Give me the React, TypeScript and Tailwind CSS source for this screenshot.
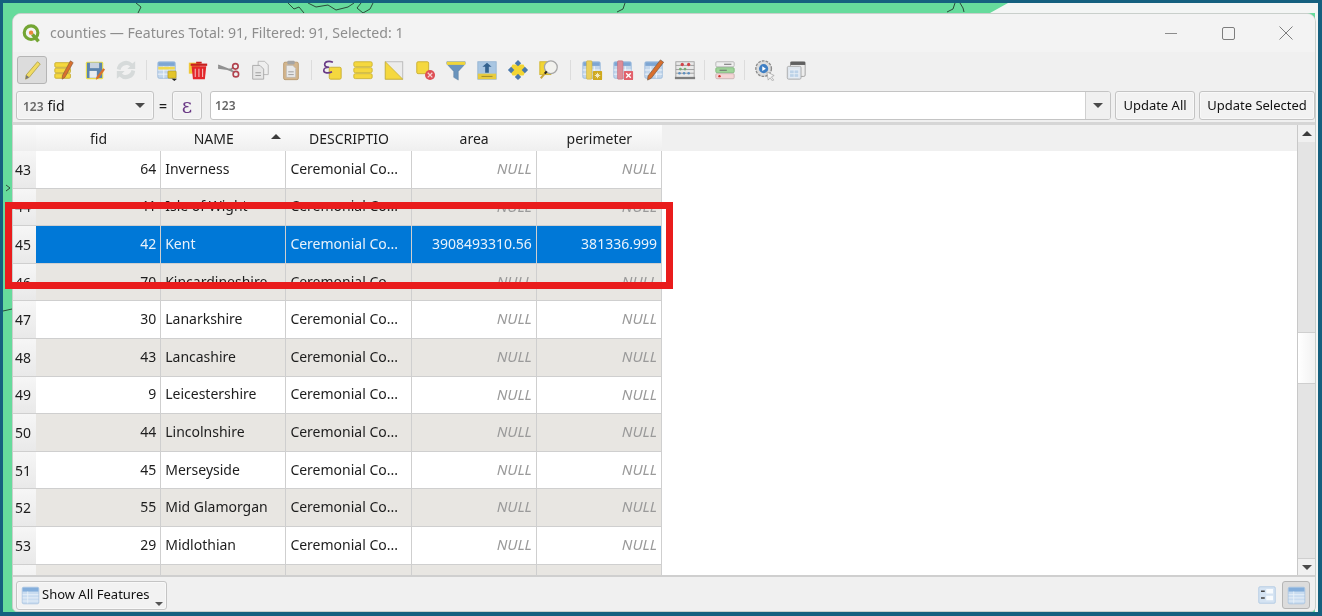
import type { ReactNode } from "react";

const rows = [
  { n: 43, fid: 64, name: "Inverness" },
  { n: 44, fid: 41, name: "Isle of Wight" },
  { n: 45, fid: 42, name: "Kent", area: "3908493310.56", perimeter: "381336.999", selected: true },
  { n: 46, fid: 70, name: "Kincardineshire" },
  { n: 47, fid: 30, name: "Lanarkshire" },
  { n: 48, fid: 43, name: "Lancashire" },
  { n: 49, fid: 9, name: "Leicestershire" },
  { n: 50, fid: 44, name: "Lincolnshire" },
  { n: 51, fid: 45, name: "Merseyside" },
  { n: 52, fid: 55, name: "Mid Glamorgan" },
  { n: 53, fid: 29, name: "Midlothian" },
];

function Ico({ children }: { children: ReactNode }) {
  return (
    <svg viewBox="0 0 24 24" className="h-[22px] w-[22px]">
      {children}
    </svg>
  );
}

// table glyph used by several of the toolbar icons
const TableBase = () => (
  <>
    <rect x="2" y="3" width="19" height="18" rx="1.5" fill="#c4d7ec" stroke="#9dbbdc" />
    <rect x="2.5" y="3.5" width="18" height="4" fill="#7ea6d3" />
    <path d="M2 12h19M2 16.5h19M8.5 8v13M14.5 8v13" stroke="#f3f7fb" strokeWidth="1" />
  </>
);

const icons: ReactNode[] = [
  <Ico key="edit">
    <path d="M18 3l3 2.5L9 20l-4 2 .6-4.5z" fill="#f1dc63" stroke="#a89a3e" strokeWidth=".8" />
    <path d="M5.6 17.5L9 20l-4 2z" fill="#777" />
  </Ico>,
  <Ico key="multi">
    <rect x="2" y="4" width="17" height="5" rx="1" fill="#f5d83e" stroke="#c8ae32" />
    <rect x="2" y="10" width="17" height="5" rx="1" fill="#f5d83e" stroke="#c8ae32" />
    <rect x="2" y="16" width="17" height="5" rx="1" fill="#f5d83e" stroke="#c8ae32" />
    <path d="M19 2l3 2-9 16-3 2 .3-4z" fill="#d9702e" stroke="#8a5a3a" strokeWidth=".7" />
  </Ico>,
  <Ico key="save">
    <rect x="2" y="3" width="19" height="19" rx="1.5" fill="#f0e34a" />
    <rect x="3.2" y="4" width="16.6" height="16.8" fill="#5c84ad" />
    <rect x="6.5" y="4" width="10" height="6" fill="#c8d3df" />
    <rect x="6" y="13" width="8" height="7.5" fill="#e9edf1" />
    <path d="M21 10l2 1.5-7 9.5-3 1.5.5-3z" fill="#d9702e" />
  </Ico>,
  <Ico key="reload">
    <path d="M2 11A10 10 0 0 1 19 5l3-2.500V11h-8.500l3-3A6.500 6.500 0 0 0 6 12z" fill="#d6dada" />
    <path d="M22 13A10 10 0 0 1 5 19l-3 2.500V13h8.500l-3 3A6.500 6.500 0 0 0 18 12z" fill="#d6dada" />
  </Ico>,
  "sep",
  <Ico key="newrow">
    <TableBase />
    <rect x="2.5" y="8.5" width="18" height="3" fill="#f2d94d" />
    <rect x="13" y="13" width="9" height="8" rx="1" fill="#e3c42b" stroke="#a08a20" strokeWidth=".6" />
    <path d="M17 21.5h6l-3 2.5z" fill="#222" />
  </Ico>,
  <Ico key="trash">
    <rect x="2" y="4" width="12" height="12" fill="#f0c93a" />
    <path d="M5 8h16l-1.5 14h-13z" fill="#e3262a" />
    <rect x="4" y="5" width="18" height="2.5" fill="#c9201f" />
    <rect x="10" y="3" width="6" height="2" fill="#c9201f" />
    <path d="M9 10.5v9M13 10.5v9M17 10.5v9" stroke="#f5b9b9" strokeWidth="1.2" />
  </Ico>,
  <Ico key="cut">
    <path d="M0 7l14 5.500 4 2M0 9.500l14 2 3-2.500" stroke="#919191" strokeWidth="2" fill="none" />
    <circle cx="19" cy="8" r="3" fill="none" stroke="#b2434e" strokeWidth="1.800" />
    <circle cx="19.500" cy="16.500" r="3" fill="none" stroke="#b2434e" strokeWidth="1.800" />
  </Ico>,
  <Ico key="copy">
    <path d="M10 2.5h7l4 4V17H10z" fill="#efefef" stroke="#b5b5b5" />
    <path d="M4 7h8l4 4v11H4z" fill="#e6e6e6" stroke="#a9a9a9" />
    <path d="M7 15h6M7 18h6" stroke="#9a9a9a" />
  </Ico>,
  <Ico key="paste">
    <rect x="4" y="3.5" width="16" height="19" rx="1.5" fill="#d4b68d" stroke="#b99a70" />
    <rect x="8" y="2" width="8" height="4" rx="1" fill="#a5a5a5" />
    <path d="M7 7h7l3 3v10H7z" fill="#e8e8e8" stroke="#b3b3b3" strokeWidth=".6" />
    <path d="M9 14h6M9 17h6" stroke="#9a9a9a" />
  </Ico>,
  "sep",
  <Ico key="selexp">
    <rect x="9" y="9" width="13" height="13" rx="1.5" fill="#f5d83e" stroke="#c8ae32" />
    <path d="M13 3.5C8 1.5 4 3 4 6c0 2 2 3 5 3-4 0-6 1.5-6 3.5 0 3 5 3.5 9 1.5" fill="none" stroke="#6a3c86" strokeWidth="1.8" />
  </Ico>,
  <Ico key="selall">
    <rect x="2" y="3" width="20" height="5.4" rx="1.6" fill="#f5d83e" stroke="#cdb537" />
    <rect x="2" y="9.5" width="20" height="5.4" rx="1.6" fill="#f5d83e" stroke="#cdb537" />
    <rect x="2" y="16" width="20" height="5.4" rx="1.6" fill="#f5d83e" stroke="#cdb537" />
  </Ico>,
  <Ico key="invert">
    <rect x="2.5" y="3" width="19" height="19" fill="#ececec" stroke="#b8b8b8" />
    <path d="M2.5 3v19h19z" fill="#f5d83e" stroke="#cdb537" />
  </Ico>,
  <Ico key="desel">
    <rect x="3" y="3" width="13" height="13" rx="1.5" fill="#f5d83e" stroke="#c8ae32" />
    <circle cx="17.5" cy="17.5" r="5.5" fill="#de5057" />
    <path d="M15 15l5 5M20 15l-5 5" stroke="#f7d3d3" strokeWidth="1.4" />
  </Ico>,
  <Ico key="filter">
    <path d="M2 3h20v2.5l-7.5 8V23l-5-3v-6.5L2 5.500z" fill="#6a94bd" stroke="#55799c" strokeWidth=".5" />
    <rect x="2" y="3" width="20" height="3.400" fill="#f0d63a" />
  </Ico>,
  <Ico key="top">
    <rect x="2" y="3" width="20" height="19" fill="#a9c6e2" stroke="#95b5d4" />
    <path d="M12 4l5 4.500h-3V15h-4V8.500H7z" fill="#33628f" />
    <rect x="2" y="16" width="20" height="6" fill="#e7cb3e" />
    <path d="M6 19h12" stroke="#99882a" />
  </Ico>,
  <Ico key="pan">
    <path d="M6 6h12l3 6-3 6H6l-3-6z" fill="#f2d534" />
    <path d="M12 1l3.500 3.500L12 8 8.500 4.500zM12 16l3.500 3.500L12 23l-3.500-3.500zM4.500 8.500L8 12l-3.500 3.500L1 12zM19.500 8.500L23 12l-3.500 3.500L16 12z" fill="#4a79ad" />
  </Ico>,
  <Ico key="zoom">
    <rect x="2" y="3" width="12" height="14" fill="#f2d534" stroke="#cfb52f" />
    <circle cx="14" cy="9" r="7" fill="#f2f2ee" stroke="#a7a7a7" strokeWidth="1.400" />
    <path d="M9 14l-6 7" stroke="#c7a63a" strokeWidth="2.200" />
    <path d="M9.500 13.500L7.500 16" stroke="#222" strokeWidth="2.200" />
  </Ico>,
  "sep12",
  <Ico key="newfield">
    <TableBase />
    <rect x="6" y="2" width="6" height="20" rx="1" fill="#eacf5c" stroke="#c9ae3c" strokeWidth=".6" />
    <rect x="13" y="13" width="10" height="10" rx="1" fill="#cfa91d" />
    <path d="M18 15v6M15 18h6M16 16l4 4M20 16l-4 4" stroke="#f4edc9" strokeWidth="1" />
  </Ico>,
  <Ico key="delfield">
    <TableBase />
    <rect x="6" y="2" width="6" height="20" rx="1" fill="#dd8c97" stroke="#c46a76" strokeWidth=".6" />
    <rect x="13" y="13" width="10" height="10" rx="1" fill="#e2606b" />
    <path d="M15.500 15.500l5 5M20.500 15.500l-5 5" stroke="#fff" strokeWidth="1.500" />
  </Ico>,
  <Ico key="editfield">
    <TableBase />
    <path d="M19 1l3.500 2.500L9 21l-4 2 .5-4.500z" fill="#d9702e" stroke="#7b5a44" strokeWidth=".8" />
  </Ico>,
  <Ico key="abacus">
    <rect x="2" y="3" width="20" height="18" fill="#e9e9e9" stroke="#a2a2a2" />
    <rect x="1" y="19.500" width="22" height="2.500" fill="#7d7d7d" />
    <path d="M2 7h20M2 11.500h20M2 15.500h20" stroke="#9a9a9a" />
    <circle cx="9" cy="6" r="1.800" fill="#d2444a" />
    <circle cx="16" cy="6" r="1.800" fill="#d2444a" />
    <circle cx="7" cy="11" r="1.500" fill="#76ad76" />
    <circle cx="12" cy="11" r="1.500" fill="#76ad76" />
    <circle cx="6" cy="15.500" r="1.400" fill="#5d8fbf" />
    <circle cx="11" cy="15.500" r="1.400" fill="#5d8fbf" />
    <circle cx="16" cy="15.500" r="1.400" fill="#5d8fbf" />
  </Ico>,
  "sep9",
  <Ico key="cond">
    <rect x="2" y="3" width="20" height="5.500" rx="1.200" fill="#efefef" stroke="#b5b5b5" />
    <rect x="2" y="9.500" width="20" height="5.500" rx="1.200" fill="#9fd59a" stroke="#84b87f" />
    <rect x="2" y="16" width="20" height="5.500" rx="1.200" fill="#f5d5d5" stroke="#c8b4b4" />
    <path d="M11 5.700h8M6 12.200h8" stroke="#6e6e6e" strokeWidth="1.200" />
    <circle cx="6" cy="18.700" r="1.300" fill="#d0322f" />
  </Ico>,
  "sep9",
  <Ico key="actions">
    <circle cx="10.500" cy="10.500" r="8.500" fill="#dcdcdc" stroke="#8d8d8d" strokeWidth="1.500" strokeDasharray="3 1.200" />
    <circle cx="10.500" cy="10.500" r="5" fill="#3f7fc4" />
    <path d="M9 8l4 2.500L9 13z" fill="#fff" />
    <path d="M14 14l8 4-3 1.500L21.500 23l-1.500 .8-2.500-3.300L15.500 23z" fill="#f4f4f4" stroke="#9a9a9a" strokeWidth=".7" />
  </Ico>,
  <Ico key="dock">
    <rect x="6" y="3" width="16" height="16" rx="1.500" fill="#ececec" stroke="#9f9f9f" />
    <rect x="6" y="3" width="16" height="3.500" fill="#606060" />
    <rect x="2.500" y="8" width="15" height="14" rx="1.500" fill="#dfe6ee" stroke="#a9a9a9" />
    <path d="M5 12h10v8H5zM5 16h10M10 12v8" fill="#bcd2e8" stroke="#eef3f8" strokeWidth=".8" />
  </Ico>,
];

const TableIcon = () => (
  <svg viewBox="0 0 24 24" className="h-[19px] w-[19px] shrink-0">
    <rect x="1.500" y="1.500" width="21" height="21" rx="2" fill="#c9dcf0" stroke="#a8c4e0" />
    <rect x="2" y="2" width="20" height="5" fill="#84aedb" />
    <path d="M2 11h20M2 15h20M2 19h20M8.500 7v15" stroke="#eef4fa" />
  </svg>
);

const btn =
  "flex h-[29px] shrink-0 items-center rounded-[3px] border border-[#c4c4c4] bg-[#f2f2f2] shadow-[inset_0_0_0_1px_#f8f8f8] text-[13px] text-[#111]";

function Cell({ w, children, className = "" }: { w: string; children?: ReactNode; className?: string }) {
  return (
    <div className={`flex h-full shrink-0 items-center truncate border-r border-[#cfcfcf] px-[4px] pb-[2px] ${w} ${className}`}>
      {children}
    </div>
  );
}

function Arrow({ up }: { up?: boolean }) {
  return up ? (
    <div className="h-0 w-0 border-x-[5px] border-b-[5px] border-x-transparent border-b-[#3c3c3c]" />
  ) : (
    <div className="h-0 w-0 border-x-[5px] border-t-[5px] border-x-transparent border-t-[#4a4a4a]" />
  );
}

function Separator({ kind }: { kind: string }) {
  const w = kind === "sep12" ? "w-[12px]" : kind === "sep9" ? "w-[9px]" : "w-[10px]";
  return (
    <div className={`flex justify-center ${w}`}>
      <div className="h-[20px] w-px bg-[#dcdcdc]" />
    </div>
  );
}

export default function App() {
  return (
    <div className="relative h-[616px] w-[1322px] overflow-hidden bg-[#15607f] p-[3px] font-['Noto_Sans',sans-serif] text-[14px] text-[#1d1d1d] blur-[0.35px]">
      <div className="relative h-[609px] w-[1315px] overflow-hidden bg-[#66db9c] pl-[9px] pt-[10px]">
        {/* bits of the map behind the window */}
        <svg className="absolute left-0 top-0 h-full w-full" viewBox="0 0 1315 609" fill="none" stroke="#2a4a3a" strokeWidth="1">
          <path d="M1005 0H1315V609H1312V10H987z" fill="#f3f5f4" stroke="none" />
          <path d="M133 0l5 4-3 6M285 0l6 6 5-2 5 6M305 0l8 4 12-2 8 5 12-3 6-4M358 0l-4 5 6 5 7-4 3-6" />
          <path d="M622 0l-2 6-6 3" />
          <path d="M952 0l-2 6-6 3M957 0l3 5 1 4" />
          <path d="M3 182l4 3-4 3M0 308l9-2" />
        </svg>

        {/* attribute table window */}
        <div className="relative flex h-[599px] w-[1304px] flex-col overflow-hidden rounded-t-[9px] rounded-b-[5px] border border-[#c9cfcb] bg-[#f0f0f0]">
          <div className="flex h-[38px] shrink-0 items-center bg-[#f3f3f3] pl-[8px]">
            <svg viewBox="0 0 24 24" className="h-[21px] w-[21px]">
              <circle cx="11.500" cy="11" r="7.800" fill="none" stroke="#73a533" strokeWidth="3.600" />
              <path d="M13 13l7 8" stroke="#73a533" strokeWidth="4" />
              <circle cx="11.500" cy="11" r="2.500" fill="#e8893a" />
            </svg>
            <span className="ml-[8px] text-[14.100px] text-[#8d8d8d]">counties — Features Total: 91, Filtered: 91, Selected: 1</span>
            <div className="ml-auto flex items-center">
              <div className="mr-[45px] h-px w-[12px] bg-[#8c8c8c]" />
              <div className="mr-[44px] h-[13px] w-[13px] rounded-[2px] border border-[#7d7d7d]" />
              <svg viewBox="0 0 14 14" className="mr-[22px] h-[14px] w-[14px]" stroke="#7d7d7d" strokeWidth="1">
                <path d="M0.500 0.500l13 13M13.500 0.500l-13 13" />
              </svg>
            </div>
          </div>

          <div className="flex h-[37px] shrink-0 items-center pb-[2px] pl-[4px]">
            {icons.map((icon, i) =>
              typeof icon === "string" ? (
                <Separator key={i} kind={icon} />
              ) : (
                <div
                  key={i}
                  className={
                    i === 0
                      ? "mr-px flex h-[28px] w-[30px] items-center justify-center rounded-[3px] border border-[#b5b5b5] bg-[#dcdcdc]"
                      : "flex h-[28px] w-[31px] items-center justify-center"
                  }
                >
                  {icon}
                </div>
              ),
            )}
          </div>

          <div className="flex h-[36px] shrink-0 items-start border-b-[3px] border-[#d6d6d6] pl-[3px] pt-[2px]">
            <div className={`${btn} w-[138px] justify-between pl-[6px] pr-[8px]`}>
              <span className="flex items-baseline gap-[4px]">
                <span className="text-[12px] font-semibold text-[#666]">123</span>
                <span className="text-[14px]">fid</span>
              </span>
              <Arrow />
            </div>
            <span className="mx-[5px] mt-[4px] w-[8px] shrink-0 text-center text-[14px] font-semibold">=</span>
            <div className={`${btn} w-[30px] justify-center`}>
              <span className="font-['DejaVu_Serif',serif] text-[20px] text-[#6b3a86]">ε</span>
            </div>
            <div className="ml-[8px] flex h-[29px] w-[901px] shrink-0 overflow-hidden rounded-[3px] border border-[#c4c4c4] bg-white">
              <div className="flex flex-1 items-center pl-[4px] text-[12px] font-semibold text-[#666]">123</div>
              <div className="flex w-[25px] items-center justify-center border-l border-[#d0d0d0] bg-[#f0f0f0]">
                <Arrow />
              </div>
            </div>
            <div className={`${btn} ml-[4px] w-[80px] justify-center`}>Update All</div>
            <div className={`${btn} ml-[4px] w-[116px] justify-center`}>Update Selected</div>
          </div>

          <div className="flex min-h-0 flex-1 border-b-2 border-[#cfcfcf]">
            <div className="flex min-w-0 flex-1 flex-col overflow-hidden bg-white">
              <div className="flex h-[26px] shrink-0 items-center bg-[#f0f0f0]">
                <div className="h-full w-[23px] shrink-0 bg-gradient-to-b from-[#fbfbfb] to-[#eeeeee]" />
                {["fid", "NAME", "DESCRIPTIO", "area", "perimeter"].map((h) => (
                  <div
                    key={h}
                    className={`relative flex h-full w-[125.200px] shrink-0 items-center justify-center bg-gradient-to-b from-[#fdfdfd] to-[#efefef] ${h === "NAME" ? "pr-[20px]" : ""}`}
                  >
                    {h}
                    {h === "NAME" && (
                      <span className="absolute right-[5px] top-[9px]">
                        <Arrow up />
                      </span>
                    )}
                  </div>
                ))}
              </div>
              {[...rows, { n: 54, fid: 0, name: "" }].map((r, i) => {
                const sel = "selected" in r && r.selected;
                const bg = sel ? "bg-[#0078d7] text-[#e8f2fb]" : i % 2 ? "bg-[#e8e6e2]" : "bg-white";
                const area = "area" in r ? r.area : "NULL";
                const perimeter = "perimeter" in r ? r.perimeter : "NULL";
                const nullCls = sel ? "justify-end" : "justify-end text-[15px] italic text-[#9a9a9a]";
                return (
                  <div key={r.n} className="flex h-[37.600px] shrink-0">
                    <div className="flex h-full w-[23px] shrink-0 items-center border-b border-[#cfcfcf] bg-gradient-to-b from-[#f6f6f6] to-[#e9e9e9] pl-[2px]">
                      {r.name && r.n}
                    </div>
                    <div className={`flex h-full w-[626px] shrink-0 border-b border-[#cfcfcf] ${bg}`}>
                      <Cell w="w-[125.200px]" className="justify-end">{r.name && r.fid}</Cell>
                      <Cell w="w-[125.200px]">{r.name}</Cell>
                      <Cell w="w-[125.200px]">{r.name && "Ceremonial Co..."}</Cell>
                      <Cell w="w-[125.200px]" className={nullCls}>{r.name && area}</Cell>
                      <Cell w="w-[125.200px]" className={nullCls}>{r.name && perimeter}</Cell>
                    </div>
                  </div>
                );
              })}
            </div>
            <div className="flex w-[18px] shrink-0 flex-col border-l border-[#c8c8c8] bg-[#e4e4e4]">
              <div className="flex h-[17px] shrink-0 items-center justify-center bg-[#f0f0f0]">
                <Arrow up />
              </div>
              <div className="h-[190px] shrink-0" />
              <div className="h-[52px] shrink-0 border-y border-[#cfcfcf] bg-gradient-to-r from-white to-[#f2f2f2]" />
              <div className="flex-1" />
              <div className="flex h-[17px] shrink-0 items-center justify-center border-t border-[#cfcfcf] bg-[#f0f0f0]">
                <Arrow />
              </div>
            </div>
          </div>

          <div className="flex h-[34px] shrink-0 items-center pl-[3px] pr-[5px] pt-[2px]">
            <div className={`${btn} relative w-[151px] gap-[2px] px-[4px]`}>
              <TableIcon />
              Show All Features
              <span className="absolute bottom-[3px] right-[3px]">
                <span className="block h-0 w-0 border-x-[4px] border-t-[4px] border-x-transparent border-t-[#555]" />
              </span>
            </div>
            <div className="ml-auto flex items-center gap-[6px]">
              <svg viewBox="0 0 24 24" className="h-[18px] w-[18px]">
                <rect x="1" y="1" width="22" height="22" rx="1.500" fill="#d5e3f2" stroke="#a8c4e0" />
                <path d="M4 7h5M4 16h5" stroke="#444" strokeWidth="2" />
                <rect x="11" y="4" width="9" height="6" fill="#f8fbfe" />
                <rect x="11" y="13" width="9" height="6" fill="#f8fbfe" />
              </svg>
              <div className="flex h-[28px] w-[28px] items-center justify-center rounded-[3px] border border-[#b5b5b5] bg-[#dcdcdc]">
                <TableIcon />
              </div>
            </div>
          </div>
        </div>
      </div>

      {/* red highlight drawn over the selected row */}
      <div className="absolute left-[5px] top-[202px] h-[87px] w-[668px] border-[7px] border-[#e91c1c]" />
    </div>
  );
}
